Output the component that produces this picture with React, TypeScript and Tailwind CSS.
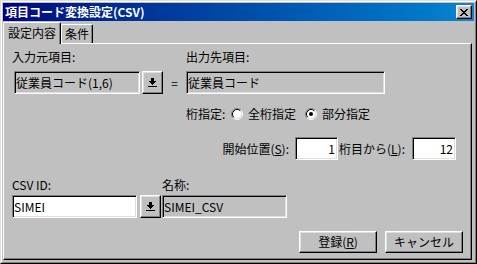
import React from "react";

const raised =
  "border border-t-white border-l-white border-r-black border-b-black shadow-[inset_-1px_-1px_0_#808080,inset_1px_1px_0_#dfdfdf]";
const sunken =
  "border border-t-[#808080] border-l-[#808080] border-r-white border-b-white shadow-[inset_1px_1px_0_#000,inset_-1px_-1px_0_#dfdfdf]";

function DownIcon() {
  return (
    <svg width="9" height="9" viewBox="0 0 9 9" shapeRendering="crispEdges">
      <rect x="3" y="0" width="3" height="3" fill="#000" />
      <rect x="1" y="3" width="7" height="1" fill="#000" />
      <rect x="2" y="4" width="5" height="1" fill="#000" />
      <rect x="3" y="5" width="3" height="1" fill="#000" />
      <rect x="4" y="6" width="1" height="1" fill="#000" />
      <rect x="0" y="8" width="9" height="1" fill="#000" />
    </svg>
  );
}

function CloseIcon() {
  const rows: [number, number][][] = [
    [[0, 2], [6, 2]],
    [[1, 2], [5, 2]],
    [[2, 4]],
    [[3, 2]],
    [[2, 4]],
    [[1, 2], [5, 2]],
    [[0, 2], [6, 2]],
  ];
  return (
    <svg width="8" height="7" viewBox="0 0 8 7" shapeRendering="crispEdges">
      {rows.map((r, y) =>
        r.map(([x, w], i) => <rect key={`${y}-${i}`} x={x} y={y} width={w} height={1} fill="#000" />)
      )}
    </svg>
  );
}

function Radio({ checked }: { checked?: boolean }) {
  return (
    <svg width="12" height="12" viewBox="0 0 12 12">
      <circle cx="6" cy="6" r="4.5" fill="#fff" />
      <path d="M2.11 9.89 A5.5 5.5 0 0 1 9.89 2.11" stroke="#808080" strokeWidth="1" fill="none" />
      <path d="M9.89 2.11 A5.5 5.5 0 0 1 2.11 9.89" stroke="#fff" strokeWidth="1" fill="none" />
      <path d="M2.82 9.18 A4.5 4.5 0 0 1 9.18 2.82" stroke="#000" strokeWidth="1" fill="none" />
      <path d="M9.18 2.82 A4.5 4.5 0 0 1 2.82 9.18" stroke="#dfdfdf" strokeWidth="1" fill="none" />
      {checked && <circle cx="6" cy="6" r="2" fill="#000" />}
    </svg>
  );
}

function ArrowButton() {
  return (
    <div className={`${raised} w-[21px] h-[23px] flex items-center justify-center bg-[#c0c0c0]`}>
      <DownIcon />
    </div>
  );
}

export default function App() {
  return (
    <div className="w-[477px] h-[264px] bg-[#c0c0c0] border border-t-[#dfdfdf] border-l-[#dfdfdf] border-r-black border-b-black font-['Noto_Sans_CJK_JP','Liberation_Sans',sans-serif] text-[12px] text-black">
      <div className="w-full h-full border border-t-white border-l-white border-r-[#808080] border-b-[#808080] p-px flex flex-col">
        {/* Title bar */}
        <div className="h-[18px] bg-linear-to-r from-[#000080] to-[#1084d0] flex items-center justify-between pl-[2px] pr-[2px] shrink-0">
          <span className="text-white font-bold leading-[18px] text-[12px]">項目コード変換設定(CSV)</span>
          <div className={`${raised} w-[16px] h-[14px] bg-[#c0c0c0] flex items-center justify-center`}>
            <CloseIcon />
          </div>
        </div>

        {/* Tabs */}
        <div className="h-[23px] -mb-px flex items-end relative z-10 shrink-0">
          <div className="w-[58px] h-[22px] bg-[#c0c0c0] border-t border-l border-t-white border-l-white border-r border-r-black shadow-[inset_-1px_0_0_#808080] rounded-tl-[2px] rounded-tr-[2px] flex items-center justify-center leading-[14px] pb-[2px]">
            設定内容
          </div>
          <div className="w-[32px] h-[19px] mb-px bg-[#c0c0c0] border-t border-l border-t-white border-l-white border-r border-r-black shadow-[inset_-1px_0_0_#808080] rounded-tl-[2px] rounded-tr-[2px] flex items-center justify-center leading-[14px]">
            条件
          </div>
        </div>

        {/* Panel */}
        <div className="flex-1 mr-[2px] mb-px border border-t-white border-l-white border-r-black border-b-black shadow-[inset_-1px_-1px_0_#808080] flex flex-col pl-[8px]">
          <div className="mt-[6px] h-[14px] leading-[14px] flex">
            <div className="w-[174px]">入力元項目:</div>
            <div>出力先項目:</div>
          </div>
          <div className="mt-[7px] h-[23px] flex">
            <div className={`${sunken} ml-[2px] w-[126px] h-[23px] bg-[#c0c0c0] flex items-center pl-[1px] leading-[14px]`}>
              従業員コード(1,6)
            </div>
            <div className="ml-[2px]">
              <ArrowButton />
            </div>
            <div className="w-[23px] flex items-center justify-center leading-[14px]">=</div>
            <div className={`${sunken} w-[199px] h-[23px] bg-[#c0c0c0] flex items-center pl-[1px] leading-[14px]`}>
              従業員コード
            </div>
          </div>

          <div className="mt-[13px] h-[14px] flex items-center ml-[174px] leading-[14px]">
            <div className="w-[45px]">桁指定:</div>
            <Radio />
            <div className="ml-[5px] w-[57px]">全桁指定</div>
            <Radio checked />
            <div className="ml-[5px]">部分指定</div>
          </div>

          <div className="mt-[16px] h-[23px] flex items-center ml-[208px] leading-[14px]">
            <div className="w-[75px] text-right pr-[6px]">
              開始位置(<span className="underline underline-offset-[1px]">S</span>):
            </div>
            <div className={`${sunken} w-[43px] h-[23px] bg-white flex items-center justify-end pr-[2px]`}>1</div>
            <div className="w-[74px] text-right pr-[7px]">
              桁目から(<span className="underline underline-offset-[1px]">L</span>):
            </div>
            <div className={`${sunken} w-[44px] h-[23px] bg-white flex items-center justify-end pr-[2px]`}>12</div>
          </div>

          <div className="mt-[18px] h-[14px] leading-[14px] flex">
            <div className="w-[150px]">CSV ID:</div>
            <div>名称:</div>
          </div>
          <div className="mt-[3px] h-[23px] flex">
            <div className={`${sunken} w-[125px] h-[23px] bg-white flex items-center pl-[1px] leading-[14px]`}>SIMEI</div>
            <div className="ml-[3px]">
              <ArrowButton />
            </div>
            <div className={`${sunken} ml-px w-[125px] h-[23px] bg-[#c0c0c0] flex items-center pl-[1px] leading-[14px]`}>
              SIMEI_CSV
            </div>
          </div>

          <div className="mt-[13px] h-[22px] flex">
            <div className={`${raised} ml-[287px] w-[78px] h-[22px] flex items-center justify-center leading-[14px]`}>
              登録(<span className="underline underline-offset-[1px]">R</span>)
            </div>
            <div className={`${raised} ml-[8px] w-[78px] h-[22px] flex items-center justify-center leading-[14px]`}>
              キャンセル
            </div>
          </div>
        </div>
      </div>
    </div>
  );
}
